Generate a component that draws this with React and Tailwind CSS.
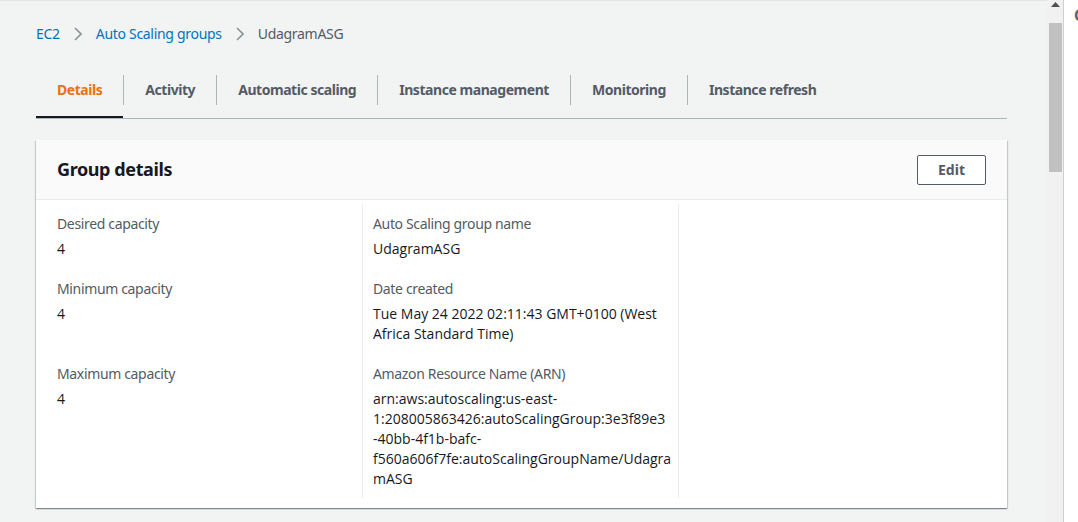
const ember = { fontFamily: '"Noto Sans", "Open Sans", sans-serif' };

function Chevron() {
  return (
    <svg width="8" height="14" viewBox="0 0 8 14" className="mx-[14px] shrink-0">
      <path d="M1 1l6 6-6 6" fill="none" stroke="#879596" strokeWidth="1.6" />
    </svg>
  );
}

const tabs = ["Details", "Activity", "Automatic scaling", "Instance management", "Monitoring", "Instance refresh"];

function Field({ label, children, last }) {
  return (
    <div className={last ? "pb-[9px]" : "pb-[20px]"}>
      <div className="text-[14px] leading-[20px] tracking-[-0.35px] text-[#545b64]">{label}</div>
      <div className="mt-[5px] text-[14px] leading-[20px] text-[#16191f]" style={{ fontFamily: '"Open Sans", sans-serif' }}>
        {children}
      </div>
    </div>
  );
}

export default function App() {
  return (
    <div className="flex h-[522px] w-[1078px] overflow-hidden bg-white" style={ember}>
      <main className="w-[1047px] shrink-0 border-t border-[#e3e5e5] bg-[#f2f3f3] pl-[36px] pr-[40px]">
        <nav className="flex items-center pt-[23px] text-[14px] leading-[20px] tracking-[-0.3px]">
          <a className="text-[#0073bb]">EC2</a>
          <Chevron />
          <a className="text-[#0073bb]">Auto Scaling groups</a>
          <Chevron />
          <span className="text-[#545b64]">UdagramASG</span>
        </nav>

        <div className="mt-[17px] flex h-[58px] items-center border-b border-[#aab7b8]">
          {tabs.map((t, i) => (
            <div key={t} className="flex h-full items-center">
              {i > 0 && <div className="h-[30px] w-px bg-[#aab7b8]" />}
              <div
                className={
                  "relative flex h-full items-center px-[21px] text-[14px] font-bold tracking-[-0.45px] " +
                  (i === 0 ? "text-[#ec7211]" : "text-[#545b64]")
                }
              >
                {t}
                {i === 0 && <div className="absolute bottom-0 left-0 right-0 h-[2px] bg-[#16191f]" />}
              </div>
            </div>
          ))}
        </div>

        <section className="mt-[21px] bg-white shadow-[0_1px_1px_0_rgba(0,28,36,0.3),1px_1px_1px_0_rgba(0,28,36,0.15),-1px_1px_1px_0_rgba(0,28,36,0.15)]">
          <header className="flex h-[60px] items-center justify-between border-b border-[#eaeded] bg-[#fafafa] pl-[21px] pr-[21px]">
            <h2 className="text-[18px] font-bold tracking-[-0.4px] text-[#16191f]">Group details</h2>
            <button className="h-[30px] w-[69px] rounded-[2px] border border-[#545b64] bg-white text-[14px] font-bold text-[#545b64]">
              Edit
            </button>
          </header>
          <div className="grid grid-cols-[316px_316px_316px] pb-[10px] pl-[10px] pt-[4px]">
            <div className="pl-[11px] pt-[10px]">
              <Field label="Desired capacity">4</Field>
              <Field label="Minimum capacity">4</Field>
              <div className="h-[20px]" />
              <Field label="Maximum capacity" last>4</Field>
            </div>
            <div className="border-l border-[#eaeded] pl-[10px] pt-[10px]">
              <Field label="Auto Scaling group name">UdagramASG</Field>
              <Field label="Date created">
                Tue May 24 2022 02:11:43 GMT+0100 (West
                <br />
                Africa Standard Time)
              </Field>
              <Field label="Amazon Resource Name (ARN)" last>
                <span className="block">arn:aws:autoscaling:us-east-</span>
                <span className="block">1:208005863426:autoScalingGroup:3e3f89e3</span>
                <span className="block">-40bb-4f1b-bafc-</span>
                <span className="block">f560a606f7fe:autoScalingGroupName/Udagra</span>
                <span className="block">mASG</span>
              </Field>
            </div>
            <div className="border-l border-[#eaeded]" />
          </div>
        </section>
      </main>

      <div className="relative w-[16px] shrink-0 bg-[#f1f1f1]">
        <svg width="9" height="5" viewBox="0 0 9 5" className="absolute left-[4px] top-[2px]">
          <path d="M4.5 0L9 5H0z" fill="#505050" />
        </svg>
        <div className="absolute left-[2px] right-[1px] top-[23px] h-[149px] bg-[#c1c1c1]" />
      </div>
      <div className="w-px shrink-0 bg-[#cfcfcf]" />
      <div className="relative flex-1 overflow-hidden bg-white">
        <span className="absolute left-[10px] top-[3px] text-[16px] font-bold text-[#5f6368]">C</span>
      </div>
    </div>
  );
}
